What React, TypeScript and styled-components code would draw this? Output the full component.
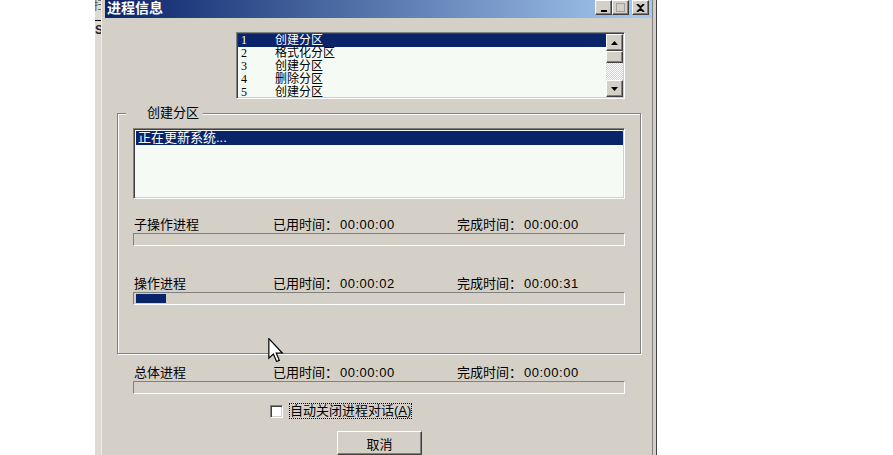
import React from 'react';
import styled, { createGlobalStyle } from 'styled-components';

const FONT = '"Liberation Sans", "Noto Sans CJK SC", sans-serif';
const FACE = '#d4d0c8';
const NAVY = '#0a246a';
const LIST_BG = '#f6faf5';

const GlobalStyle = createGlobalStyle`
  html, body {
    margin: 0;
    padding: 0;
    background: #fff;
  }
  body {
    font-family: ${FONT};
    font-size: 13px;
    color: #000;
  }
`;

const Page = styled.div`
  position: relative;
  display: flex;
  width: 893px;
  height: 455px;
  overflow: hidden;
  background: #fff;
`;

const LeftBlank = styled.div`
  width: 95px;
  flex-shrink: 0;
`;

const SideStrip = styled.div`
  width: 6px;
  flex-shrink: 0;
  display: flex;
  flex-direction: column;
  overflow: hidden;
  background: #dedbd5;
  font-size: 12px;
  line-height: 13px;
  color: #555;
`;

const StripGlyph = styled.span`
  display: block;
  white-space: nowrap;
  margin-left: -2px;
`;

const StripRule = styled.div`
  height: 1px;
  margin-top: 7px;
  background: #000;
`;

const StripLetter = styled.span`
  display: block;
  margin-top: 3px;
  color: #223;
  font-weight: bold;
`;

const Dialog = styled.div`
  width: 556px;
  flex-shrink: 0;
  box-sizing: border-box;
  display: flex;
  flex-direction: column;
  background: ${FACE};
  border-left: 1px solid #efede8;
  border-right: 1px solid #404040;
  box-shadow: inset -3px 0 0 ${FACE}, inset -4px 0 0 #808080;
`;

const TitleBar = styled.div`
  height: 18px;
  margin: 0 4px 0 3px;
  display: flex;
  align-items: flex-start;
  justify-content: space-between;
  background: linear-gradient(to right, ${NAVY}, #a6caf0);
`;

const TitleText = styled.span`
  padding: 1px 0 0 2px;
  color: #fff;
  font-weight: bold;
  font-size: 14px;
  line-height: 15px;
`;

const CaptionButtons = styled.div`
  display: flex;
  margin-right: 3px;
`;

const CaptionButton = styled.div<{ spaced?: boolean }>`
  width: 17px;
  height: 15px;
  box-sizing: border-box;
  margin-left: ${(p) => (p.spaced ? '3px' : '0')};
  display: flex;
  align-items: center;
  justify-content: center;
  background: ${FACE};
  border-top: 1px solid #fff;
  border-left: 1px solid #fff;
  border-right: 1px solid #404040;
  border-bottom: 1px solid #404040;
  box-shadow: inset -1px -1px 0 #808080;
`;

const Body = styled.div`
  display: flex;
  flex-direction: column;
  padding-top: 14px;
`;

const Sunken = styled.div`
  box-sizing: border-box;
  border-top: 1px solid #808080;
  border-left: 1px solid #808080;
  border-right: 1px solid #fff;
  border-bottom: 1px solid #fff;
`;

const StepList = styled(Sunken)`
  width: 389px;
  height: 67px;
  margin-left: 134px;
  display: flex;
  background: ${LIST_BG};
  box-shadow: inset 1px 1px 0 #404040, inset -1px -1px 0 ${FACE};
  padding: 1px;
`;

const Rows = styled.div`
  flex: 1;
  overflow: hidden;
`;

const Row = styled.div<{ selected?: boolean }>`
  display: flex;
  height: 13px;
  line-height: 13px;
  padding-left: 3px;
  font-size: 12px;
  background: ${(p) => (p.selected ? NAVY : 'transparent')};
  color: ${(p) => (p.selected ? '#fff' : '#000')};
  white-space: nowrap;
`;

const RowNumber = styled.span`
  width: 34px;
  font-family: "Liberation Serif", serif;
  font-size: 12px;
`;

const ScrollBar = styled.div`
  width: 17px;
  display: flex;
  flex-direction: column;
`;

const ScrollButton = styled.div<{ tall: number }>`
  height: ${(p) => p.tall}px;
  box-sizing: border-box;
  display: flex;
  align-items: center;
  justify-content: center;
  background: ${FACE};
  border-top: 1px solid #fff;
  border-left: 1px solid #fff;
  border-right: 1px solid #404040;
  border-bottom: 1px solid #404040;
  box-shadow: inset -1px -1px 0 #808080;
`;

const ScrollTrack = styled.div`
  flex: 1;
  background: repeating-conic-gradient(#fff 0 25%, ${FACE} 0 50%) 0 0 / 2px 2px;
`;

const Group = styled.fieldset`
  width: 524px;
  box-sizing: border-box;
  margin: 7px 0 0 15px;
  padding: 8px 15px 48px;
  border: 1px solid #808080;
  box-shadow: inset 1px 1px 0 #fff, 1px 1px 0 #fff;
  min-width: 0;
`;

const GroupLabel = styled.legend`
  margin-left: -7px;
  padding: 0 4px 0 21px;
  background: ${FACE};
  font-size: 13px;
  line-height: 14px;
`;

const StatusList = styled(Sunken)`
  height: 71px;
  background: ${LIST_BG};
  box-shadow: inset 1px 1px 0 #404040, inset -1px -1px 0 ${FACE};
  padding: 2px 1px 1px 2px;
`;

const StatusRow = styled(Row)`
  height: 14px;
  line-height: 14px;
  padding-left: 2px;
  font-size: 13px;
`;

const Section = styled.div<{ inset?: number }>`
  display: flex;
  flex-direction: column;
  margin-left: ${(p) => p.inset ?? 0}px;
  width: 492px;
`;

const LabelRow = styled.div<{ top: number }>`
  display: grid;
  grid-template-columns: 139px 184px 1fr;
  height: 15px;
  line-height: 15px;
  margin-top: ${(p) => p.top}px;
  padding-left: 1px;
  font-size: 13px;
  white-space: nowrap;
`;

const Clock = styled.span`
  margin-left: 2px;
  letter-spacing: 0.5px;
`;

const Bar = styled(Sunken)`
  height: 13px;
  margin-top: 1px;
  padding: 1px 2px;
`;

const BarFill = styled.div`
  height: 100%;
  background: ${NAVY};
`;

const CheckRow = styled.div`
  display: flex;
  align-items: center;
  height: 16px;
  margin: 9px 0 0 168px;
`;

const CheckBox = styled(Sunken)`
  width: 13px;
  height: 13px;
  background: #fff;
  box-shadow: inset 1px 1px 0 #404040, inset -1px -1px 0 ${FACE};
`;

const CheckLabel = styled.span`
  margin-left: 6px;
  padding: 0 1px;
  outline: 1px dotted #000;
  outline-offset: -1px;
  font-size: 13px;
  line-height: 16px;
  white-space: nowrap;
`;

const Mnemonic = styled.span`
  text-decoration: underline;
`;

const CancelButton = styled.div`
  width: 85px;
  height: 24px;
  box-sizing: border-box;
  margin: 12px 0 0 235px;
  display: flex;
  align-items: center;
  justify-content: center;
  background: ${FACE};
  border-top: 1px solid #fff;
  border-left: 1px solid #fff;
  border-right: 1px solid #404040;
  border-bottom: 1px solid #404040;
  box-shadow: inset -1px -1px 0 #808080;
  font-size: 13px;
`;

const Pointer = styled.svg`
  position: absolute;
  left: 268px;
  top: 338px;
`;

const Arrow = ({ down }: { down?: boolean }) => (
  <svg width="7" height="4" viewBox="0 0 7 4">
    <path d={down ? 'M0 0H7L3.5 4Z' : 'M3.5 0L7 4H0Z'} fill="#000" />
  </svg>
);

const steps = ['创建分区', '格式化分区', '创建分区', '删除分区', '创建分区'];

interface TimingProps {
  label: string;
  used: string;
  done: string;
  top: number;
  progress?: number;
}

const Timing = ({ label, used, done, top, progress }: TimingProps) => (
  <>
    <LabelRow top={top}>
      <span>{label}</span>
      <span>
        已用时间：
        <Clock>{used}</Clock>
      </span>
      <span>
        完成时间：
        <Clock>{done}</Clock>
      </span>
    </LabelRow>
    <Bar>{!!progress && <BarFill style={{ width: `${progress}px` }} />}</Bar>
  </>
);

const App = () => (
  <>
    <GlobalStyle />
    <Page>
      <LeftBlank />
      <SideStrip>
        <StripGlyph>扫</StripGlyph>
        <StripRule />
        <StripLetter>S</StripLetter>
      </SideStrip>
      <Dialog>
        <TitleBar>
          <TitleText>进程信息</TitleText>
          <CaptionButtons>
            <CaptionButton>
              <svg width="8" height="8" viewBox="0 0 8 8">
                <rect x="1" y="6" width="6" height="2" fill="#000" />
              </svg>
            </CaptionButton>
            <CaptionButton>
              <svg width="9" height="9" viewBox="0 0 9 9">
                <rect x="0.5" y="0.5" width="8" height="8" fill="none" stroke="#a0a0a0" />
              </svg>
            </CaptionButton>
            <CaptionButton spaced>
              <svg width="9" height="8" viewBox="0 0 9 8">
                <path d="M1 0L4.5 3.2L8 0M1 8L4.5 4.8L8 8" stroke="#000" strokeWidth="1.8" fill="none" />
              </svg>
            </CaptionButton>
          </CaptionButtons>
        </TitleBar>
        <Body>
          <StepList>
            <Rows>
              {steps.map((s, i) => (
                <Row key={i} selected={i === 0}>
                  <RowNumber>{i + 1}</RowNumber>
                  <span>{s}</span>
                </Row>
              ))}
            </Rows>
            <ScrollBar>
              <ScrollButton tall={17}>
                <Arrow />
              </ScrollButton>
              <ScrollButton tall={12} />
              <ScrollTrack />
              <ScrollButton tall={17}>
                <Arrow down />
              </ScrollButton>
            </ScrollBar>
          </StepList>
          <Group>
            <GroupLabel>创建分区</GroupLabel>
            <StatusList>
              <StatusRow selected>正在更新系统...</StatusRow>
            </StatusList>
            <Timing label="子操作进程" used="00:00:00" done="00:00:00" top={18} />
            <Timing label="操作进程" used="00:00:02" done="00:00:31" top={30} progress={30} />
          </Group>
          <Section inset={31}>
            <Timing label="总体进程" used="00:00:00" done="00:00:00" top={11} />
          </Section>
          <CheckRow>
            <CheckBox />
            <CheckLabel>
              自动关闭进程对话(<Mnemonic>A</Mnemonic>)
            </CheckLabel>
          </CheckRow>
          <CancelButton>取消</CancelButton>
        </Body>
      </Dialog>
      <Pointer width="16" height="25" viewBox="0 0 13 21">
        <path
          d="M0.5 0.5V17L4.3 13.4L7 19.8L9.3 18.8L6.7 12.6H11.8Z"
          fill="#fff"
          stroke="#000"
          strokeWidth="1"
          strokeLinejoin="miter"
        />
      </Pointer>
    </Page>
  </>
);

export default App;
